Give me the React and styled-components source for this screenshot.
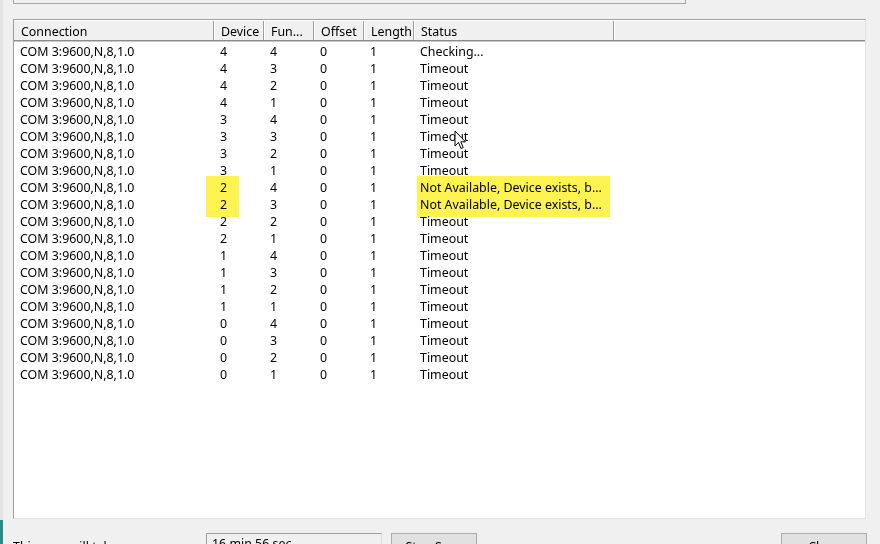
import React from "react";
import styled, { createGlobalStyle } from "styled-components";

const GlobalStyle = createGlobalStyle`
  html, body {
    margin: 0;
    padding: 0;
    background: #f0f0f0;
    overflow: hidden;
  }
  * { box-sizing: border-box; }
`;

const Window = styled.div`
  width: 880px;
  height: 544px;
  display: flex;
  background: #f0f0f0;
  font-family: "Noto Sans", "Liberation Sans", sans-serif;
  font-size: 12.4px;
  color: #000;
  overflow: hidden;
`;

const EdgeStrip = styled.div`
  width: 3px;
  flex-shrink: 0;
  background: linear-gradient(to bottom, #e4e4e4 0, #e4e4e4 520px, #2b8c8c 520px);
`;

const Main = styled.div`
  flex: 1;
  display: flex;
  flex-direction: column;
  padding-left: 10px;
  padding-right: 13px;
`;

const TopBox = styled.div`
  width: 673px;
  height: 4px;
  border: 1px solid #a8a8a8;
  border-top: none;
  flex-shrink: 0;
`;

const ListView = styled.div`
  position: relative;
  margin-top: 15px;
  width: 853px;
  height: 500px;
  background: #fff;
  border: 1px solid;
  border-color: #a0a0a0 #e3e3e3 #e3e3e3 #a0a0a0;
  flex-shrink: 0;
`;

const columns = "200px 50px 50px 50px 50px 200px 1fr";

const Header = styled.div`
  display: grid;
  grid-template-columns: ${columns};
  height: 21px;
  background: #f0f0f0;
  border-top: 1px solid #fff;
  border-bottom: 1px solid #8c8c8c;
  box-shadow: 0 1px 0 #c8c8c8;
`;

const HeaderCell = styled.div`
  padding-left: 7px;
  padding-top: 1px;
  line-height: 19px;
  white-space: nowrap;
  overflow: hidden;
  border-right: ${(p) => (p.$last ? "none" : "1px solid #a0a0a0")};
  box-shadow: ${(p) => (p.$last ? "none" : "1px 0 0 #fff")};
`;

const Body = styled.div`
  padding-top: 2px;
`;

const Row = styled.div`
  display: grid;
  grid-template-columns: ${columns};
  height: 17px;
`;

const Cell = styled.div`
  padding-left: 6px;
  line-height: 17px;
  white-space: nowrap;
  overflow: hidden;
`;

const Marker = styled.div`
  position: absolute;
  background: #fff352;
  mix-blend-mode: multiply;
  pointer-events: none;
`;

const Cursor = styled.svg`
  position: absolute;
  left: 440px;
  top: 110px;
`;

const BottomBar = styled.div`
  display: flex;
  align-items: flex-start;
  margin-top: 14px;
`;

const Label = styled.div`
  width: 193px;
  padding-top: 6px;
  line-height: 15px;
  white-space: nowrap;
`;

const TimeField = styled.div`
  width: 176px;
  height: 23px;
  border: 1px solid #a0a0a0;
  border-right-color: #dcdcdc;
  background: #f0f0f0;
  padding: 2px 0 0 5px;
  line-height: 15px;
`;

const Button = styled.button`
  width: 86px;
  height: 23px;
  margin-left: ${(p) => p.$gap || "0"};
  border: 1px solid #adadad;
  background: #e1e1e1;
  font-family: inherit;
  font-size: 12.4px;
  color: #000;
  padding: 0;
  line-height: 15px;
  padding-top: 3px;
`;

const Spacer = styled.div`
  flex: 1;
`;

const headers = ["Connection", "Device", "Fun...", "Offset", "Length", "Status", ""];

const rows = [];
for (let d = 4; d >= 0; d--) {
  for (let f = 4; f >= 1; f--) {
    let status = "Timeout";
    if (d === 4 && f === 4) status = "Checking...";
    if (d === 2 && (f === 4 || f === 3)) status = "Not Available, Device exists, b...";
    rows.push({ conn: "COM 3:9600,N,8,1.0", device: d, fn: f, offset: 0, length: 1, status });
  }
}

export default function App() {
  return (
    <>
      <GlobalStyle />
      <Window>
        <EdgeStrip />
        <Main>
          <TopBox />
          <ListView>
            <Header>
              {headers.map((h, i) => (
                <HeaderCell key={i} $last={i === headers.length - 1}>
                  {h}
                </HeaderCell>
              ))}
            </Header>
            <Body>
              {rows.map((r, i) => (
                <Row key={i}>
                  <Cell>{r.conn}</Cell>
                  <Cell>{r.device}</Cell>
                  <Cell>{r.fn}</Cell>
                  <Cell>{r.offset}</Cell>
                  <Cell>{r.length}</Cell>
                  <Cell>{r.status}</Cell>
                  <Cell />
                </Row>
              ))}
            </Body>
            <Marker style={{ left: 192, top: 156, width: 33, height: 41 }} />
            <Marker style={{ left: 403, top: 156, width: 193, height: 41 }} />
            <Cursor width="13" height="20" viewBox="0 0 13 20">
              <path
                d="M1 1 L1 16 L4.5 12.5 L7 18.5 L9.2 17.6 L6.8 11.8 L11.5 11.8 Z"
                fill="#fff"
                stroke="#000"
                strokeWidth="1"
                strokeLinejoin="miter"
              />
            </Cursor>
          </ListView>
          <BottomBar>
            <Label>This scan will take</Label>
            <TimeField>16 min 56 sec</TimeField>
            <Button $gap="9px">Stop Scan</Button>
            <Spacer />
            <Button>Close</Button>
          </BottomBar>
        </Main>
      </Window>
    </>
  );
}
